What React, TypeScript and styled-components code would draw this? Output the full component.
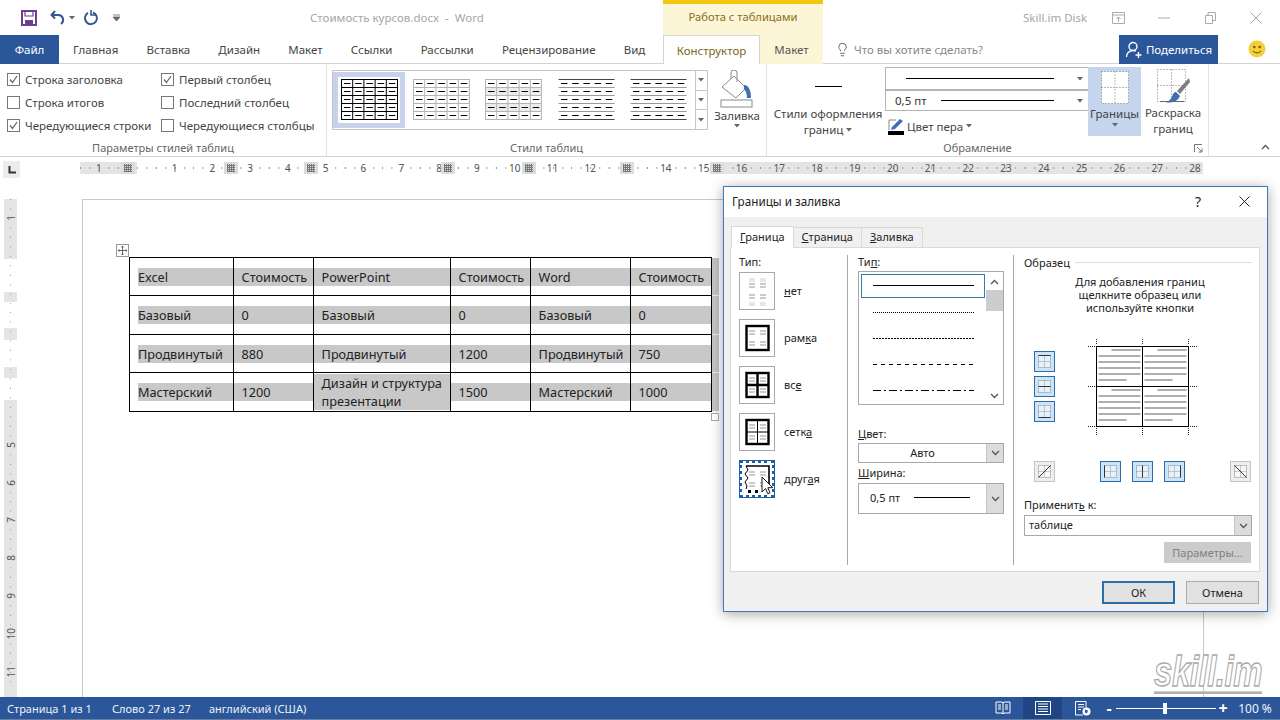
import React from 'react'
import styled, { createGlobalStyle } from 'styled-components'
import { Lightbulb } from 'lucide-react'

const GlobalStyle = createGlobalStyle`
	html, body {
		margin: 0;
		padding: 0;
		background: #fff;
	}
	* {
		box-sizing: border-box;
	}
`

const UI_FONT = `"Noto Sans", "Open Sans", sans-serif`
const Caret = () => (
	<svg width="6" height="4" viewBox="0 0 6 4"><path d="M0 0h6L3 3.500z" fill="#666" /></svg>
)

const Chevron = ({ up }: { up?: boolean }) => (
	<svg width="9" height="6" viewBox="0 0 9 6">
		<path d={up ? 'M1 5l3.5-3.5L8 5' : 'M1 1l3.5 3.5L8 1'} fill="none" stroke="#555" strokeWidth="1.3" />
	</svg>
)

const Check = () => (
	<svg width="11" height="11" viewBox="0 0 11 11">
		<path d="M2 5.5l2.5 3L9 2" fill="none" stroke="#666" strokeWidth="1.3" />
	</svg>
)

/* table style thumbnails in the ribbon gallery */
const TableThumb = ({ kind }: { kind: 'black' | 'gray' | 'shaded' | 'lines' | 'banded' }) => {
	const cols = [0, 1, 2, 3, 4]
	const rows = [0, 1, 2, 3, 4]
	const grid = kind === 'black' ? '#000' : kind === 'lines' || kind === 'banded' ? '#555' : '#b4b4b4'
	return (
		<svg width="57" height="42" viewBox="0 0 57 42">
			{kind === 'shaded' && rows.filter((r) => r % 2 === 1).map((r) => <rect key={r} x="0.5" y={0.5 + r * 8} width="56" height="8" fill="#ececec" />)}
			{(kind === 'black' || kind === 'gray' || kind === 'shaded') && (
				<>
					<rect x="0.5" y="0.5" width="56" height="40" fill="none" stroke={grid} />
					{[1, 2, 3, 4].map((c) => <path key={c} d={`M${0.5 + c * 11.2} 0.5V40.5`} stroke={grid} />)}
					{[1, 2, 3, 4].map((r) => <path key={r} d={`M0.5 ${0.5 + r * 8}H56.5`} stroke={grid} />)}
				</>
			)}
			{(kind === 'lines' || kind === 'banded') && [0, 1, 2, 3, 4, 5].map((r) => <path key={r} d={`M0.5 ${0.5 + r * 8}H56.5`} stroke={r % 5 === 0 ? '#444' : '#999'} />)}
			{cols.map((c) => rows.map((r) => <path key={`${c}-${r}`} d={`M${3 + c * 11.2} ${4.5 + r * 8}h6.5`} stroke="#000" />))}
		</svg>
	)
}

const marks = [
	[9, 11], [9, 14], [20, 11], [20, 14], [9, 22], [9, 25], [20, 22], [20, 25],
]

/* border presets on the left of the dialog */
const PresetIcon = ({ kind }: { kind: 'none' | 'box' | 'all' | 'grid' | 'custom' }) => (
	<svg width="34" height="36" viewBox="0 0 34 36">
		{marks.map(([x, y], i) => <path key={i} d={`M${x} ${y}h6`} stroke="#b5b5b5" strokeWidth="1.4" />)}
		{kind === 'none' && [6, 8].map((y) => <path key={y} d={`M9 ${y}h6M20 ${y}h6M9 ${y + 24}h6M20 ${y + 24}h6`} stroke="#ccc" />)}
		{(kind === 'box' || kind === 'all' || kind === 'grid') && <rect x="6.5" y="6" width="22" height="24" fill="none" stroke="#000" strokeWidth="2.4" />}
		{kind === 'all' && <path d="M17.5 6v24M6.5 18h22" stroke="#000" strokeWidth="2.4" />}
		{kind === 'grid' && <path d="M17.5 6v24M6.5 18h22" stroke="#000" strokeWidth="1" />}
		{kind === 'custom' && (
			<>
				<path d="M6 5h23v22" fill="none" stroke="#000" strokeWidth="1.6" />
				<path d="M6 5l2 4-3 4 3 4-3 4 2 4-1 3" fill="none" stroke="#000" strokeWidth="1" />
				<rect x="8" y="29" width="3" height="3" />
				<rect x="15" y="29" width="3" height="3" />
				<path d="M22 16v15l3.6-3.4 2.2 5.2 2.2-1-2.2-5 4.8-.2z" fill="#fff" stroke="#000" strokeWidth="0.9" />
			</>
		)}
	</svg>
)

/* small toggle icon: dotted square with a solid line */
const EdgeIcon = ({ d }: { d: string }) => (
	<svg width="19" height="19" viewBox="0 0 19 19">
		<rect x="3.5" y="3.5" width="12" height="12" fill="#fff" fillOpacity="0.5" stroke="#888" strokeDasharray="1 1" />
		<path d="M9.5 3.5v12M3.5 9.5h12" stroke="#999" strokeDasharray="1 1" />
		<path d={d} stroke="#333" strokeWidth="1" fill="none" />
	</svg>
)

const ROW_OFFSETS = [2.7, 8.7, 14.7, 20.7, 26.7, 32.7]

const SampleDrawing = () => {
	const quad = (x: number, y: number) => ROW_OFFSETS.map((off, i) => {
		const width = i === 0 ? 29 : i === 5 ? 28 : 42
		const left = i === 0 ? x + 13 : x
		return <rect key={`${x}-${y}-${i}`} x={left} y={Math.round(y + off)} width={width} height="2" fill="#b0b0b0" />
	})
	return (
		<svg width="113" height="96" viewBox="0 0 113 96">
			{quad(12.5, 7.5)}
			{quad(58.5, 7.5)}
			{quad(12.5, 47.5)}
			{quad(58.5, 47.5)}
			<rect x="10.5" y="7.5" width="92" height="80" fill="none" stroke="#000" />
			<path d="M56.5 7.5v80M10.5 47.5h92" stroke="#000" />
			<path d="M10.5 0v6M2 7.5h7M56.5 0v6M102.5 0v6M104 7.5h7M10.5 89v7M2 87.500h7M56.5 89v7M102.5 89v7M104 87.500h7M2 47.5h7M104 47.5h7" stroke="#222" strokeDasharray="1 1" />
		</svg>
	)
}

const STYLES: Array<'black' | 'gray' | 'shaded' | 'lines' | 'banded'> = ['black', 'gray', 'shaded', 'lines', 'banded']
const MAIN_TABS = ['Главная', 'Вставка', 'Дизайн', 'Макет', 'Ссылки', 'Рассылки', 'Рецензирование', 'Вид']

const H_LABELS: Array<string> = ['1', '', '1', '2', '3', '4', '5', '6', '7', '8', '9', '10', '11', '12', '', '14', '15', '16', '17', '18', '19', '20', '21', '22', '23', '24', '25', '26', '27', '28']
const H_MARKS = [41, 144, 224, 361, 442, 540, 630]
const V_LABELS = ['1', '', '', '', '', '', '5', '6', '7', '8', '9', '10', '11']

const TABLE = [
	['Excel', 'Стоимость', 'PowerPoint', 'Стоимость', 'Word', 'Стоимость'],
	['Базовый', '0', 'Базовый', '0', 'Базовый', '0'],
	['Продвинутый', '880', 'Продвинутый', '1200', 'Продвинутый', '750'],
	['Мастерский', '1200', 'Дизайн и структура презентации', '1500', 'Мастерский', '1000'],
]
const COL_WIDTHS = [104, 80, 137, 80, 100, 81]
const ROW_HEIGHTS = [38, 39, 38, 39]

const PRESETS: Array<{ kind: 'none' | 'box' | 'all' | 'grid' | 'custom'; label: React.ReactNode }> = [
	{ kind: 'none', label: <span><u>н</u>ет</span> },
	{ kind: 'box', label: <span>рам<u>к</u>а</span> },
	{ kind: 'all', label: <span>вс<u>е</u></span> },
	{ kind: 'grid', label: <span>сетк<u>а</u></span> },
	{ kind: 'custom', label: <span>друг<u>а</u>я</span> },
]

const LINE_STYLES = ['solid', 'dotted', 'fine', 'dashed', 'dashdot']

export default function App() {
	return (
		<Shell>
			<GlobalStyle />
			<TitleBar>
				<Quick>
					<svg width="16" height="16" viewBox="0 0 16 16">
						<path d="M1 1h14v14H1z" fill="none" stroke="#6f3f8e" strokeWidth="2" />
						<path d="M4 1h8v5H4z" fill="none" stroke="#6f3f8e" strokeWidth="1.2" />
						<path d="M4 10h8v5H4z" fill="#6f3f8e" />
					</svg>
					<QuickGap $w={13}>
						<svg width="16" height="16" viewBox="0 0 16 16">
							<path d="M5 1L1.5 5 5 8.5M2 5h7a5 5 0 0 1 2 9" fill="none" stroke="#35588f" strokeWidth="2" />
						</svg>
					</QuickGap>
					<QuickGap $w={3}><Caret /></QuickGap>
					<QuickGap $w={8}>
						<svg width="16" height="16" viewBox="0 0 16 16">
							<path d="M10 2.5a6 6 0 1 1-5 .4" fill="none" stroke="#35588f" strokeWidth="2" />
							<path d="M8 0v5h5" fill="none" stroke="#35588f" strokeWidth="1.6" />
						</svg>
					</QuickGap>
					<QuickGap $w={14}>
						<svg width="7" height="7" viewBox="0 0 7 7"><path d="M0 1h7M0 3h7L3.500 7z" stroke="#666" fill="#666" strokeWidth="0.8" /></svg>
					</QuickGap>
				</Quick>
				<DocTitle>Стоимость курсов.docx  -  Word</DocTitle>
				<ContextHeader>Работа с таблицами</ContextHeader>
				<DiskName>Skill.im Disk</DiskName>
				<WindowButton>
					<svg width="13" height="12" viewBox="0 0 13 12"><path d="M.5.5h12v11H.5zM.5 3h12M6.5 5v5M4.500 7l2-2 2 2" fill="none" stroke="#aaa" /></svg>
				</WindowButton>
				<WindowButton><svg width="12" height="2" viewBox="0 0 12 2"><path d="M0 1h12" stroke="#aaa" /></svg></WindowButton>
				<WindowButton>
					<svg width="11" height="12" viewBox="0 0 11 12"><path d="M.5 3.500h7v8h-7zM3 3.500V.5h7.500v8H8" fill="none" stroke="#aaa" /></svg>
				</WindowButton>
				<WindowButton>
					<svg width="12" height="12" viewBox="0 0 12 12"><path d="M.5.5l11 11M11.500.5l-11 11" stroke="#aaa" /></svg>
				</WindowButton>
			</TitleBar>

			<TabBar>
				<FileTab>Файл</FileTab>
				<MainTabs>
					{MAIN_TABS.map((t) => <Tab key={t}>{t}</Tab>)}
				</MainTabs>
				<ContextTabs>
					<ActiveTab>Конструктор</ActiveTab>
					<ContextTab>Макет</ContextTab>
				</ContextTabs>
				<TellMe>
					<Lightbulb size={15} strokeWidth={1.4} color="#555" />
					<span>Что вы хотите сделать?</span>
				</TellMe>
				<ShareButton>
					<svg width="18" height="18" viewBox="0 0 18 18">
						<circle cx="8" cy="5.500" r="4" fill="none" stroke="#fff" strokeWidth="1.4" />
						<path d="M1.500 16c0-4 3-6.500 6.500-6.500 1 0 2 .2 2.800.6M13.500 11v6M10.500 14h6" fill="none" stroke="#fff" strokeWidth="1.4" />
					</svg>
					Поделиться
				</ShareButton>
				<Smiley>
					<svg width="18" height="18" viewBox="0 0 18 18">
						<circle cx="9" cy="9" r="8.500" fill="#f3cf3c" />
						<circle cx="6.300" cy="7" r="1.200" fill="#6b5a10" />
						<circle cx="11.700" cy="7" r="1.200" fill="#6b5a10" />
						<path d="M5 11c2 2.500 6 2.500 8 0" fill="none" stroke="#6b5a10" strokeWidth="1.100" />
					</svg>
				</Smiley>
			</TabBar>

			<Ribbon>
				<Group $width={327}>
					<GroupBody>
						<Options>
							<Option><Box><Check /></Box>Строка заголовка</Option>
							<Option><Box><Check /></Box>Первый столбец</Option>
							<Option><Box />Строка итогов</Option>
							<Option><Box />Последний столбец</Option>
							<Option><Box><Check /></Box>Чередующиеся строки</Option>
							<Option><Box />Чередующиеся столбцы</Option>
						</Options>
					</GroupBody>
					<GroupLabel>Параметры стилей таблиц</GroupLabel>
				</Group>

				<Group $width={440}>
					<GroupBody>
						<Gallery>
							<GalleryItems>
								{STYLES.map((s, i) => (
									<GalleryItem key={s} $selected={i === 0}><TableThumb kind={s} /></GalleryItem>
								))}
							</GalleryItems>
							<GalleryScroll>
								<GalleryArrow><Caret /></GalleryArrow>
								<GalleryArrow><Caret /></GalleryArrow>
								<GalleryArrow><Caret /></GalleryArrow>
							</GalleryScroll>
						</Gallery>
						<BigButton $width={52} $top={2}>
							<svg width="38" height="38" viewBox="0 0 38 38">
								<path d="M4 17L16 6l12 12-10 10z" fill="#fff" stroke="#8a8a8a" />
								<path d="M13 9V3a3 3 0 0 1 6 0v9" fill="none" stroke="#8a8a8a" />
								<path d="M26 15c5 0 7 6 7 13h-4c0-4-1-7-3-9z" fill="#3f6fb0" />
								<rect x="3" y="30" width="31" height="7" fill="#fff" stroke="#8a8a8a" />
							</svg>
							<BigLabel>Заливка</BigLabel>
							<Caret />
						</BigButton>
					</GroupBody>
					<GroupLabel>Стили таблиц</GroupLabel>
				</Group>

				<Group $width={442}>
					<FrameBody>
						<StyleButton>
							<StyleSample />
							<BigLabel>Стили оформления</BigLabel>
							<BigLabel>границ <Caret /></BigLabel>
						</StyleButton>
						<PenColumn>
							<PenCombo $height={23}>
								<PenLine $width={148} $left={20} />
								<Caret />
							</PenCombo>
							<PenCombo $height={20}>
								<PenValue>0,5 пт</PenValue>
								<PenLine $width={113} $left={14} />
								<Caret />
							</PenCombo>
							<PenColor>
								<svg width="16" height="18" viewBox="0 0 16 18">
									<path d="M1 13V3h7" fill="none" stroke="#888" />
									<path d="M4 10l8-8 3 2-8 8-4 1z" fill="#3f6fb0" />
									<rect y="14" width="16" height="4" fill="#000" />
								</svg>
								Цвет пера <Caret />
							</PenColor>
						</PenColumn>
						<BordersButton>
							<svg width="30" height="35" viewBox="0 0 30 35">
								<rect x="1.500" y="1.500" width="27" height="32" fill="#fff" stroke="#777" strokeDasharray="1 2" />
								<path d="M15 1.500v32M1.500 17.500h27" stroke="#777" strokeDasharray="1 2" />
							</svg>
							<BigLabel>Границы</BigLabel>
							<Caret />
						</BordersButton>
						<BigButton $width={58}>
							<svg width="36" height="38" viewBox="0 0 36 38">
								<rect x="2.500" y="2.500" width="28" height="32" fill="#fff" stroke="#777" strokeDasharray="1 2" />
								<path d="M16.500 2.500v32M2.500 18.500h28" stroke="#777" strokeDasharray="1 2" />
								<path d="M5 34.500h24" stroke="#666" />
								<path d="M34 11L22 24l3 3L35 15z" fill="#7d7d7d" />
								<path d="M21 25l4 4c-2 5-7 7-14 6.500 3-1.500 5-3 6-6 .8-2.500 2-4.500 4-4.500z" fill="#3f6fb0" />
							</svg>
							<BigLabel>Раскраска</BigLabel>
							<BigLabel>границ</BigLabel>
						</BigButton>
					</FrameBody>
					<GroupLabel $shift={20}>Обрамление</GroupLabel>
					<Launcher>
						<svg width="9" height="9" viewBox="0 0 9 9"><path d="M.5 8V.5H8M3 3l5 5M8 4.500V8H4.500" fill="none" stroke="#777" /></svg>
					</Launcher>
				</Group>
				<Collapse><Chevron up /></Collapse>
			</Ribbon>

			<RulerRow>
				<TabStop>
					<svg width="8" height="8" viewBox="0 0 8 8"><path d="M1.500 0v6.500H8" fill="none" stroke="#333" strokeWidth="2" /></svg>
				</TabStop>
				<HRuler>
					{H_LABELS.map((l, i) => <HCell key={i}>{l}</HCell>)}
					{H_MARKS.map((m) => <ColumnMark key={m} style={{ left: m }} />)}
				</HRuler>
			</RulerRow>

			<DocArea>
				<VRuler>
					{V_LABELS.map((l, i) => <VCell key={i}><VNumber>{l}</VNumber></VCell>)}
				</VRuler>
				<Page>
					<TableWrap>
						<MoveHandle>
							<svg width="9" height="9" viewBox="0 0 9 9">
								<path d="M4.500 0v9M0 4.500h9M3.200 1.300L4.500 0l1.300 1.300M3.200 7.700L4.500 9l1.300-1.300M1.300 3.200L0 4.500l1.300 1.300M7.700 3.200L9 4.500 7.700 5.800" fill="none" stroke="#444" strokeWidth="0.8" />
							</svg>
						</MoveHandle>
						<DocTable>
							<colgroup>
								{COL_WIDTHS.map((w, i) => <col key={i} style={{ width: w }} />)}
								<col style={{ width: 7 }} />
							</colgroup>
							<tbody>
								{TABLE.map((row, r) => (
									<tr key={r} style={{ height: ROW_HEIGHTS[r] }}>
										{row.map((cell, c) => (
											<Cell key={c}>
												<Shade $first={c === 0} $tall={cell.length > 20}>{cell}</Shade>
											</Cell>
										))}
										<RowEnd />
									</tr>
								))}
							</tbody>
						</DocTable>
						<ResizeHandle />
					</TableWrap>
				</Page>
				<Watermark>skill.im</Watermark>
			</DocArea>

			<StatusBar>
				<StatusText $width={105}>Страница 1 из 1</StatusText>
				<StatusText $width={97}>Слово 27 из 27</StatusText>
				<StatusText $width={110}>английский (США)</StatusText>
				<StatusSpring />
				<ViewButton>
					<svg width="16" height="14" viewBox="0 0 16 14"><path d="M1 1h6l1 1 1-1h6v11H9l-1 1-1-1H1zM8 2v10M3 4h3M3 6h3M3 8h3M10 4h3M10 6h3M10 8h3" fill="none" stroke="#fff" /></svg>
				</ViewButton>
				<ViewButton $active>
					<svg width="16" height="14" viewBox="0 0 16 14"><path d="M.5.5h15v13H.5zM3 3h10M3 5.500h10M3 8h10M3 10.500h10" fill="none" stroke="#fff" /></svg>
				</ViewButton>
				<ViewButton>
					<svg width="17" height="15" viewBox="0 0 17 15">
						<path d="M9 14H1.500V.5H12v6M4 3.500h6M4 6h6M4 8.500h3" fill="none" stroke="#fff" />
						<circle cx="12.500" cy="10.500" r="4" fill="#fff" />
						<path d="M11 8.500l3 1-1 3-2-1z" fill="#2b579a" />
					</svg>
				</ViewButton>
				<ZoomSign>-</ZoomSign>
				<ZoomTrack><ZoomThumb /></ZoomTrack>
				<ZoomSign>+</ZoomSign>
				<ZoomValue>100 %</ZoomValue>
			</StatusBar>

			<Dialog>
				<DialogTitle>
					<span>Границы и заливка</span>
					<DialogHelp>?</DialogHelp>
					<svg width="11" height="11" viewBox="0 0 11 11"><path d="M.5.5l10 10M10.500.5l-10 10" stroke="#222" /></svg>
				</DialogTitle>
				<DialogTabs>
					<DialogTab $active><span><u>Г</u>раница</span></DialogTab>
					<DialogTab><span><u>С</u>траница</span></DialogTab>
					<DialogTab><span><u>З</u>аливка</span></DialogTab>
				</DialogTabs>
				<Panel>
					<LeftPane>
						<FieldLabel>Тип:</FieldLabel>
						<Presets>
							{PRESETS.map((p) => (
								<PresetRow key={p.kind}>
									<PresetButton $focused={p.kind === 'custom'}><PresetIcon kind={p.kind} /></PresetButton>
									{p.label}
								</PresetRow>
							))}
						</Presets>
					</LeftPane>
					<MidPane>
						<FieldLabel>Ти<u>п</u>:</FieldLabel>
						<LineList>
							<LineRows>
								{LINE_STYLES.map((s, i) => (
									<LineRow key={s} $selected={i === 0}><LineSample $kind={s} /></LineRow>
								))}
							</LineRows>
							<ListScroll>
								<ScrollArrow><Chevron up /></ScrollArrow>
								<ScrollThumb />
								<ScrollSpring />
								<ScrollArrow><Chevron /></ScrollArrow>
							</ListScroll>
						</LineList>
						<FieldLabel $top={22}><u>Ц</u>вет:</FieldLabel>
						<Combo $height={20} $top={1}>
							<ComboValue $center>Авто</ComboValue>
							<ComboArrow><Chevron /></ComboArrow>
						</Combo>
						<FieldLabel $top={3}><u>Ш</u>ирина:</FieldLabel>
						<Combo $height={31} $top={2}>
							<ComboValue>0,5 пт</ComboValue>
							<WidthLine />
							<ComboArrow><Chevron /></ComboArrow>
						</Combo>
					</MidPane>
					<RightPane>
						<Legend>Образец</Legend>
						<Hint>Для добавления границ<br />щелкните образец или<br />используйте кнопки</Hint>
						<SampleRow>
							<SideToggles>
								<Toggle $on><EdgeIcon d="M3.500 3.500h12" /></Toggle>
								<Toggle $on><EdgeIcon d="M3.500 9.500h12" /></Toggle>
								<Toggle $on><EdgeIcon d="M3.500 15.500h12" /></Toggle>
							</SideToggles>
							<SampleFrame><SampleDrawing /></SampleFrame>
						</SampleRow>
						<BottomToggles>
							<Toggle><EdgeIcon d="M3.500 15.500l12-12" /></Toggle>
							<ToggleGroup>
								<Toggle $on><EdgeIcon d="M3.500 3.500v12" /></Toggle>
								<Toggle $on><EdgeIcon d="M9.500 3.500v12" /></Toggle>
								<Toggle $on><EdgeIcon d="M15.500 3.500v12" /></Toggle>
							</ToggleGroup>
							<Toggle><EdgeIcon d="M3.500 3.500l12 12" /></Toggle>
						</BottomToggles>
						<FieldLabel $top={16}>Применит<u>ь</u> к:</FieldLabel>
						<Combo $height={21} $top={2} $width={228}>
							<ComboValue $left={4}>таблице</ComboValue>
							<ComboArrow><Chevron /></ComboArrow>
						</Combo>
						<OptionsButton>Параметры...</OptionsButton>
					</RightPane>
				</Panel>
				<DialogFooter>
					<DialogButton $primary>ОК</DialogButton>
					<DialogButton>Отмена</DialogButton>
				</DialogFooter>
			</Dialog>
		</Shell>
	)
}

const Shell = styled.div`
	position: relative;
	width: 1280px;
	height: 720px;
	overflow: hidden;
	background: #fff;
	font-family: ${UI_FONT};
	font-size: 11.5px;
	color: #444;
	display: flex;
	flex-direction: column;
`

const TitleBar = styled.div`
	height: 35px;
	display: flex;
	align-items: center;
	flex: none;
`

const Quick = styled.div`
	width: 310px;
	padding-left: 21px;
	display: flex;
	align-items: center;
`

const QuickGap = styled.span<{ $w: number }>`
	margin-left: ${(p) => p.$w}px;
	display: flex;
	align-items: center;
`

const DocTitle = styled.div`
	width: 353px;
	color: #a6a6a6;
	white-space: pre;
	font-size: 11.5px;
`

const ContextHeader = styled.div`
	width: 160px;
	height: 35px;
	background: #fdf6d6;
	border-top: 4px solid #f2c811;
	color: #8c6c1c;
	font-size: 11.2px;
	text-align: center;
	line-height: 25px;
`

const DiskName = styled.div`
	margin-left: 200px;
	width: 72px;
	color: #a6a6a6;
	font-size: 11.5px;
`

const WindowButton = styled.div`
	width: 46px;
	display: flex;
	justify-content: center;
`

const TabBar = styled.div`
	height: 29px;
	flex: none;
	display: flex;
	align-items: stretch;
	border-bottom: 1px solid #d4d4d4;
`

const FileTab = styled.div`
	width: 59px;
	background: #2b579a;
	color: #fff;
	display: flex;
	align-items: center;
	justify-content: center;
	margin-bottom: -1px;
`

const MainTabs = styled.div`
	width: 604px;
	display: flex;
`

const Tab = styled.div`
	padding: 0 14.1px;
	display: flex;
	align-items: center;
	color: #444;
`

const ContextTabs = styled.div`
	width: 160px;
	background: #fdf6d6;
	display: flex;
	margin-bottom: -1px;
`

const ActiveTab = styled.div`
	width: 97px;
	background: #fff;
	border: 1px solid #d4d4d4;
	border-bottom: none;
	color: #7d6420;
	display: flex;
	align-items: center;
	justify-content: center;
`

const ContextTab = styled.div`
	flex: 1;
	display: flex;
	align-items: center;
	justify-content: center;
	color: #555;
`

const TellMe = styled.div`
	display: flex;
	align-items: center;
	gap: 4px;
	padding-left: 12px;
	width: 296px;
	color: #888;
`

const ShareButton = styled.div`
	width: 99px;
	background: #2b579a;
	color: #fff;
	display: flex;
	align-items: center;
	justify-content: center;
	gap: 3px;
	margin-bottom: -1px;
`

const Smiley = styled.div`
	flex: 1;
	display: flex;
	align-items: center;
	justify-content: center;
	padding-left: 16px;
`

const Ribbon = styled.div`
	height: 93px;
	flex: none;
	display: flex;
	border-bottom: 1px solid #d4d4d4;
`

const Group = styled.div<{ $width: number }>`
	position: relative;
	width: ${(p) => p.$width}px;
	display: flex;
	flex-direction: column;
	border-right: 1px solid #e2e2e2;
`

const GroupBody = styled.div`
	flex: 1;
	display: flex;
	padding-top: 4px;
`

const FrameBody = styled.div`
	flex: 1;
	display: flex;
	padding-top: 3px;
`

const GroupLabel = styled.div<{ $shift?: number }>`
	height: 15px;
	line-height: 14px;
	padding-right: ${(p) => p.$shift ?? 0}px;
	text-align: center;
	font-size: 11px;
	color: #666;
`

const Launcher = styled.div`
	position: absolute;
	right: 5px;
	bottom: 3px;
	display: flex;
`

const Options = styled.div`
	display: grid;
	grid-template-columns: 154px 1fr;
	grid-auto-rows: 23px;
	padding-left: 7px;
`

const Option = styled.div`
	display: flex;
	align-items: center;
	gap: 5px;
	white-space: nowrap;
`

const Box = styled.span`
	width: 13px;
	height: 13px;
	border: 1px solid #777;
	background: #fff;
	display: flex;
	align-items: center;
	justify-content: center;
	flex: none;
`

const Gallery = styled.div`
	margin: 2px 0 0 5px;
	width: 376px;
	height: 60px;
	display: flex;
	border: 1px solid #c6c6c6;
	border-right: none;
`

const GalleryItems = styled.div`
	flex: 1;
	display: flex;
	align-items: center;
`

const GalleryItem = styled.div<{ $selected: boolean }>`
	width: 72.4px;
	height: 56px;
	display: flex;
	align-items: center;
	justify-content: center;
	border: 5px solid ${(p) => (p.$selected ? '#c8d2ea' : 'transparent')};
`

const GalleryScroll = styled.div`
	width: 14px;
	display: flex;
	flex-direction: column;
	border-left: 1px solid #c6c6c6;
	border-right: 1px solid #c6c6c6;
`

const GalleryArrow = styled.div`
	flex: 1;
	display: flex;
	align-items: center;
	justify-content: center;
	border-bottom: 1px solid #c6c6c6;
	&:last-child {
		border-bottom: none;
	}
`

const BigButton = styled.div<{ $width: number; $top?: number }>`
	width: ${(p) => p.$width}px;
	margin: ${(p) => p.$top ?? 0}px 0 0 3px;
	display: flex;
	flex-direction: column;
	align-items: center;
	gap: 0;
`

const BigLabel = styled.div`
	line-height: 16px;
	white-space: nowrap;
	display: flex;
	align-items: center;
	justify-content: center;
	gap: 3px;
`

const StyleButton = styled.div`
	width: 118px;
	display: flex;
	flex-direction: column;
	align-items: center;
	padding: 39px 0 0 4px;
	position: relative;
`

const StyleSample = styled.div`
	position: absolute;
	top: 19px;
	width: 27px;
	border-top: 1px solid #000;
`

const PenColumn = styled.div`
	width: 203px;
	display: flex;
	flex-direction: column;
`

const PenCombo = styled.div<{ $height: number }>`
	height: ${(p) => p.$height}px;
	display: flex;
	align-items: center;
	padding-right: 5px;
	border: 1px solid #b4b4b4;
	border-right: none;
	margin-bottom: -1px;
	&:nth-child(2) {
		border-top: 2px solid #b4b4b4;
		height: 22px;
	}
`

const PenValue = styled.span`
	margin-left: 9px;
	color: #333;
`

const PenLine = styled.span<{ $width: number; $left: number }>`
	width: ${(p) => p.$width}px;
	margin-left: ${(p) => p.$left}px;
	margin-right: auto;
	border-top: 1px solid #000;
`

const PenColor = styled.div`
	display: flex;
	align-items: center;
	gap: 3px;
	padding: 7px 0 0 3px;
	white-space: nowrap;
`

const BordersButton = styled.div`
	width: 53px;
	height: 69px;
	background: #c5d5ee;
	display: flex;
	flex-direction: column;
	align-items: center;
	padding-top: 3px;
	gap: 1px;
`

const Collapse = styled.div`
	flex: 1;
	display: flex;
	align-items: flex-end;
	justify-content: flex-end;
	padding: 0 10px 6px 0;
`

const RulerRow = styled.div`
	height: 20px;
	flex: none;
	display: flex;
	align-items: flex-start;
`

const TabStop = styled.div`
	margin: 4px 0 0 3px;
	width: 17px;
	height: 17px;
	background: #ececec;
	display: flex;
	align-items: center;
	justify-content: center;
`

const HRuler = styled.div`
	position: relative;
	margin: 5px 0 0 60px;
	width: 1123px;
	height: 12px;
	display: flex;
	overflow: hidden;
	background:
		linear-gradient(to right, #e4e4e4 57px, #fff 57px, #fff 632px, #e4e4e4 632px);
`

const HCell = styled.div`
	flex: 0 0 37.8px;
	text-align: center;
	font-size: 10px;
	line-height: 12px;
	color: #555;
	background: radial-gradient(circle at 0 50%, #999 0.7px, transparent 1px) 0 0 / 9.45px 100% repeat-x;
`

const ColumnMark = styled.div`
	position: absolute;
	top: 0;
	width: 14px;
	height: 12px;
	background:
		repeating-linear-gradient(0deg, #777 0 1px, transparent 1px 2px) 3px 2px / 8px 8px no-repeat,
		repeating-linear-gradient(90deg, #777 0 1px, transparent 1px 2px) 3px 2px / 8px 8px no-repeat,
		#dcdcdc;
`

const DocArea = styled.div`
	position: relative;
	flex: 1;
	min-height: 0;
	display: flex;
	overflow: hidden;
`

const VRuler = styled.div`
	margin: 22px 0 0 4px;
	width: 13px;
	flex: none;
	background: linear-gradient(
		to bottom,
		#e4e4e4 60px,
		#fff 60px, #fff 93px,
		#e4e4e4 93px, #e4e4e4 103px,
		#fff 103px, #fff 129px,
		#e4e4e4 129px, #e4e4e4 141px,
		#fff 141px, #fff 168px,
		#e4e4e4 168px, #e4e4e4 179px,
		#fff 179px, #fff 201px,
		#e4e4e4 201px
	);
`

const VCell = styled.div`
	height: 37.8px;
	display: flex;
	align-items: center;
	justify-content: center;
	background: radial-gradient(circle at 50% 0, #999 0.7px, transparent 1px) 0 0 / 100% 9.45px repeat-y;
`

const VNumber = styled.span`
	writing-mode: vertical-rl;
	transform: rotate(180deg);
	font-size: 10px;
	line-height: 12px;
	color: #555;
`

const Page = styled.div`
	margin: 22px 0 0 65px;
	width: 1122px;
	flex: none;
	border: 1px solid #c8c8c8;
	border-bottom: none;
	padding: 57px 0 0 46px;
`

const TableWrap = styled.div`
	position: relative;
	width: 590px;
`

const MoveHandle = styled.div`
	position: absolute;
	left: -13px;
	top: -13px;
	width: 13px;
	height: 13px;
	border: 1px solid #999;
	background: #fff;
	display: flex;
	align-items: center;
	justify-content: center;
`

const DocTable = styled.table`
	border-collapse: collapse;
	table-layout: fixed;
	width: 589px;
	font-family: "Noto Sans", sans-serif;
	font-size: 12.7px;
	color: #222;
`

const Cell = styled.td`
	border: 1px solid #000;
	padding: 0;
	vertical-align: middle;
`

const Shade = styled.div<{ $tall: boolean; $first: boolean }>`
	margin-left: ${(p) => (p.$first ? 8 : 0)}px;
	padding-left: ${(p) => (p.$first ? 0 : 7.6)}px;
	background: #c8c8c8;
	min-height: 18px;
	line-height: 18px;
	white-space: ${(p) => (p.$tall ? 'normal' : 'nowrap')};
`

const RowEnd = styled.td`
	background: #c4c4c4;
	border-bottom: 1px solid #eee;
	padding: 0;
`

const ResizeHandle = styled.div`
	position: absolute;
	left: 582px;
	bottom: -9px;
	width: 8px;
	height: 8px;
	border: 1px solid #aaa;
	background: #fff;
`

const Watermark = styled.div`
	position: absolute;
	right: 18px;
	bottom: 3px;
	font-family: "Liberation Sans", sans-serif;
	font-weight: 700;
	font-style: italic;
	font-size: 33px;
	line-height: 30px;
	letter-spacing: -0.5px;
	color: #fff;
	-webkit-text-stroke: 1px #a9a9a9;
	border-bottom: 2px solid #b0b0b0;
	transform: scaleY(1.3);
	transform-origin: bottom;
`

const StatusBar = styled.div`
	height: 23px;
	flex: none;
	background: #2b579a;
	border-bottom: 1px solid #6b7f9c;
	display: flex;
	align-items: center;
	padding-left: 7px;
	color: #eef2f8;
	font-size: 11px;
`

const StatusText = styled.div<{ $width: number }>`
	width: ${(p) => p.$width}px;
	white-space: nowrap;
`

const StatusSpring = styled.div`
	flex: 1;
`

const ViewButton = styled.div<{ $active?: boolean }>`
	width: 39px;
	height: 22px;
	display: flex;
	align-items: center;
	justify-content: center;
	background: ${(p) => (p.$active ? '#1f4585' : 'transparent')};
	margin-left: 1px;
`

const ZoomSign = styled.div`
	width: 14px;
	text-align: center;
	color: #fff;
	font-size: 16px;
	font-weight: 700;
	line-height: 22px;
`

const ZoomTrack = styled.div`
	position: relative;
	width: 100px;
	height: 1px;
	background: #fff;
`

const ZoomThumb = styled.div`
	position: absolute;
	left: 47px;
	top: -5px;
	width: 4px;
	height: 11px;
	background: #fff;
`

const ZoomValue = styled.div`
	width: 50px;
	text-align: center;
	font-size: 12px;
`

const Dialog = styled.div`
	position: absolute;
	left: 723px;
	top: 186px;
	width: 545px;
	height: 426px;
	background: #f0f0f0;
	border: 1px solid #3c7ab8;
	box-shadow: 0 2px 12px rgba(0, 0, 0, 0.35);
	display: flex;
	flex-direction: column;
	color: #222;
	font-size: 11px;
`

const DialogTitle = styled.div`
	height: 30px;
	flex: none;
	background: #fff;
	display: flex;
	align-items: center;
	padding: 0 17px 2px 8px;
	font-size: 11.7px;
	color: #222;
	> span {
		flex: 1;
	}
`

const DialogHelp = styled.div`
	margin-right: 38px;
	font-size: 14px;
`

const DialogTabs = styled.div`
	height: 21px;
	margin: 9px 0 0 8px;
	flex: none;
	display: flex;
	align-items: flex-end;
	position: relative;
	z-index: 1;
`

const DialogTab = styled.div<{ $active?: boolean }>`
	height: ${(p) => (p.$active ? '22px' : '20px')};
	padding: 0 8px 2px;
	display: flex;
	align-items: center;
	border: 1px solid #d9d9d9;
	border-bottom: none;
	margin-left: -1px;
	margin-bottom: ${(p) => (p.$active ? '-1px' : '0')};
	background: ${(p) => (p.$active ? '#fff' : '#f0f0f0')};
	font-size: 11px;
`

const Panel = styled.div`
	margin: 0 7px 0 6px;
	height: 325px;
	flex: none;
	background: #fff;
	border: 1px solid #d9d9d9;
	padding: 7px 0 6px;
	display: flex;
`

const LeftPane = styled.div`
	width: 117px;
	padding-left: 8px;
	border-right: 1px solid #a8a8a8;
`

const FieldLabel = styled.div<{ $top?: number }>`
	height: 15px;
	line-height: 14px;
	margin-top: ${(p) => p.$top ?? 0}px;
	font-size: 11px;
`

const Presets = styled.div`
	margin-top: 2px;
	display: flex;
	flex-direction: column;
	gap: 9px;
`

const PresetRow = styled.div`
	display: flex;
	align-items: center;
	gap: 9px;
	> span {
		margin-top: -2px;
	}
`

const PresetButton = styled.div<{ $focused: boolean }>`
	width: 36px;
	height: 38px;
	background: #fff;
	border: 1px solid ${(p) => (p.$focused ? '#1f5f9f' : '#a8a8a8')};
	display: flex;
	align-items: center;
	justify-content: center;
	outline: ${(p) => (p.$focused ? '3px dotted #1a5fa8' : 'none')};
	outline-offset: -3px;
`

const MidPane = styled.div`
	width: 166px;
	padding-left: 10px;
	border-right: 1px solid #a8a8a8;
`

const LineList = styled.div`
	margin-top: 1px;
	width: 146px;
	height: 134px;
	border: 1px solid #a8a8a8;
	padding-top: 2px;
	display: flex;
`

const LineRows = styled.div`
	margin-left: 2px;
	width: 124px;
`

const LineRow = styled.div<{ $selected: boolean }>`
	height: 26px;
	display: flex;
	align-items: center;
	justify-content: center;
	padding-bottom: 2px;
	${(p) => (p.$selected ? 'outline: 1px solid #2d7fb0; outline-offset: -1px; height: 24px; margin-bottom: 2px;' : '')}
`

const LineSample = styled.div<{ $kind: string }>`
	width: 101px;
	height: 1px;
	background: ${(p) =>
		p.$kind === 'solid' ? '#000'
		: p.$kind === 'dotted' ? 'repeating-linear-gradient(90deg, #000 0 1px, transparent 1px 2px)'
		: p.$kind === 'fine' ? 'repeating-linear-gradient(90deg, #000 0 2px, transparent 2px 3px)'
		: p.$kind === 'dashed' ? 'repeating-linear-gradient(90deg, #000 0 4px, transparent 4px 8px)'
		: 'repeating-linear-gradient(90deg, #000 0 8px, transparent 8px 11px, #000 11px 13px, transparent 13px 16px)'};
`

const ListScroll = styled.div`
	width: 17px;
	margin: 0 0 0 1px;
	display: flex;
	flex-direction: column;
`

const ScrollArrow = styled.div`
	height: 16px;
	display: flex;
	align-items: center;
	justify-content: center;
`

const ScrollThumb = styled.div`
	height: 21px;
	background: #cdcdcd;
`

const ScrollSpring = styled.div`
	flex: 1;
`

const Combo = styled.div<{ $height: number; $top: number; $width?: number }>`
	width: ${(p) => p.$width ?? 146}px;
	height: ${(p) => p.$height}px;
	margin-top: ${(p) => p.$top}px;
	border: 1px solid #a8a8a8;
	display: flex;
	align-items: stretch;
`

const ComboValue = styled.div<{ $center?: boolean; $left?: number }>`
	flex: ${(p) => (p.$center || p.$left ? 1 : 'none')};
	display: flex;
	align-items: center;
	justify-content: ${(p) => (p.$center ? 'center' : 'flex-start')};
	padding-left: ${(p) => p.$left ?? (p.$center ? 0 : 11)}px;
	padding-bottom: 2px;
`

const WidthLine = styled.div`
	flex: 1;
	margin: 13px 16px auto 14px;
	height: 0;
	border-top: 1px solid #000;
`

const ComboArrow = styled.div`
	width: 17px;
	background: #dcdcdc;
	border-left: 1px solid #c4c4c4;
	display: flex;
	align-items: center;
	justify-content: center;
`

const RightPane = styled.div`
	flex: 1;
	padding-left: 10px;
`

const Legend = styled.div`
	width: 228px;
	height: 15px;
	display: flex;
	align-items: center;
	gap: 5px;
	&::after {
		content: '';
		flex: 1;
		border-top: 1px solid #ddd;
	}
`

const Hint = styled.div`
	width: 232px;
	margin-top: 5px;
	margin-bottom: 1px;
	text-align: center;
	font-size: 11px;
	line-height: 13px;
`

const SampleRow = styled.div`
	margin-top: 25px;
	padding-left: 10px;
	height: 96px;
	display: flex;
`

const SideToggles = styled.div`
	padding-top: 12px;
	display: flex;
	flex-direction: column;
	gap: 4px;
`

const Toggle = styled.div<{ $on?: boolean }>`
	width: 21px;
	height: 21px;
	display: flex;
	align-items: center;
	justify-content: center;
	border: 1px solid ${(p) => (p.$on ? '#2d6ca8' : '#c4c4c4')};
	background: ${(p) => (p.$on ? '#cce4f7' : '#eee')};
`

const SampleFrame = styled.div`
	margin-left: 31px;
`

const BottomToggles = styled.div`
	margin-top: 26px;
	margin-left: 10px;
	width: 217px;
	display: flex;
	justify-content: space-between;
`

const ToggleGroup = styled.div`
	display: flex;
	gap: 11px;
`

const OptionsButton = styled.div`
	margin: 6px 0 0 140px;
	width: 87px;
	height: 21px;
	background: #cccccc;
	color: #808080;
	display: flex;
	align-items: center;
	justify-content: center;
`

const DialogFooter = styled.div`
	flex: 1;
	display: flex;
	justify-content: flex-end;
	gap: 11px;
	padding: 9px 8px 0 0;
`

const DialogButton = styled.div<{ $primary?: boolean }>`
	width: 73px;
	height: 23px;
	display: flex;
	align-items: center;
	justify-content: center;
	background: #e1e1e1;
	border: ${(p) => (p.$primary ? '2px solid #2d6ca8' : '1px solid #adadad')};
`
